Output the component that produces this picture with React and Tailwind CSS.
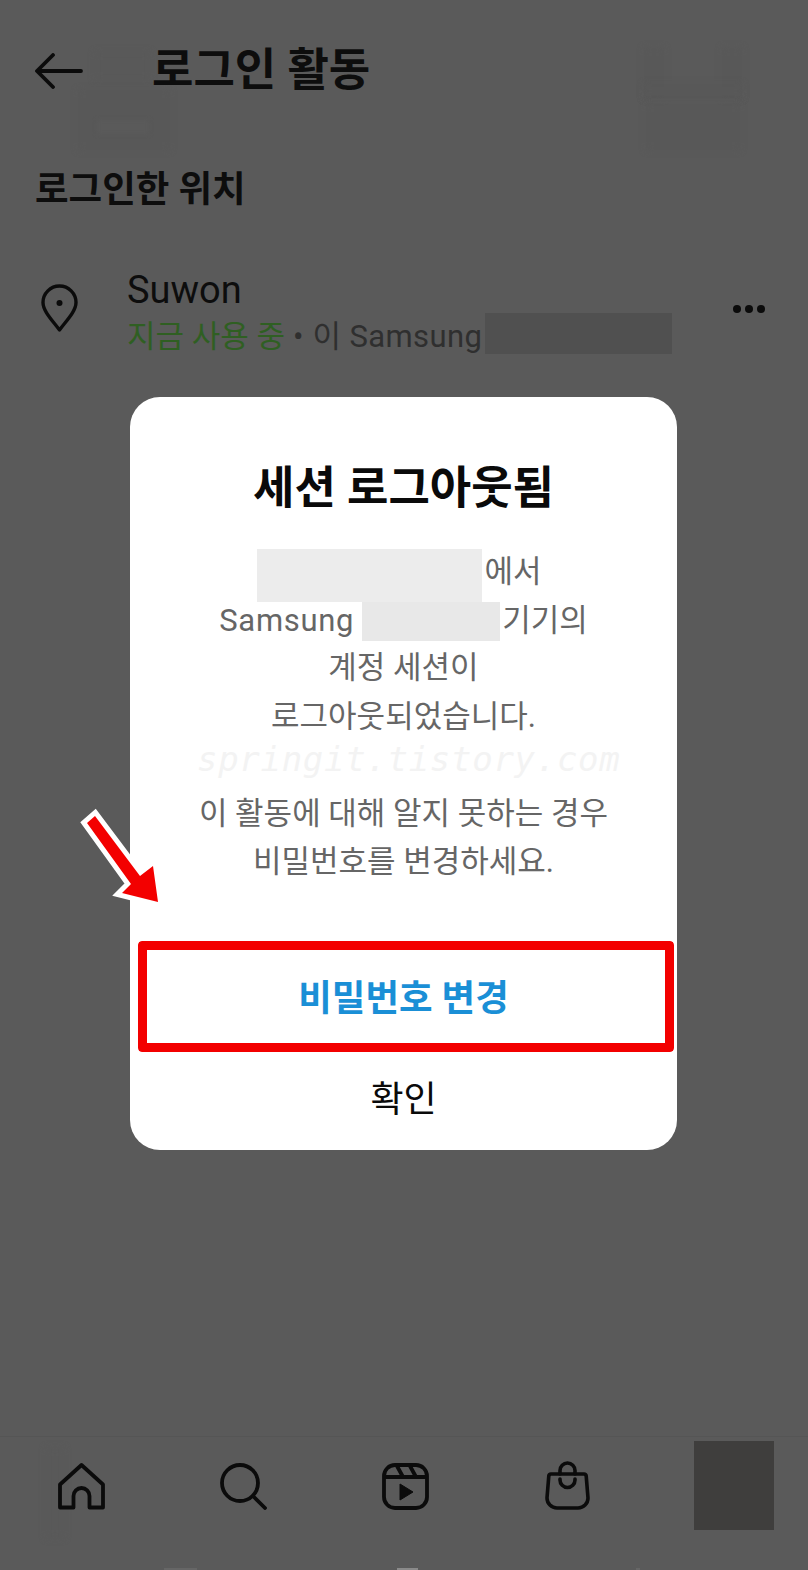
const kr = { fontFamily: '"Roboto", "Noto Sans CJK KR", sans-serif' };

function HomeIcon() {
  return (
    <svg width="47" height="47" viewBox="0 0 47 47" fill="none" stroke="#0b0b0b" strokeWidth="3.8" strokeLinejoin="round">
      <path d="M2 44.5V21.5L23.5 2L45 21.5V44.5H31.5V33a8 8 0 0 0-16 0v11.5z" />
    </svg>
  );
}

function SearchIcon() {
  return (
    <svg width="47" height="47" viewBox="0 0 47 47" fill="none" stroke="#0b0b0b" strokeWidth="3.8" strokeLinecap="round">
      <circle cx="20" cy="20" r="18" />
      <path d="M33 33l12 12" />
    </svg>
  );
}

function ReelsIcon() {
  return (
    <svg width="47" height="47" viewBox="0 0 47 47" fill="none" stroke="#0b0b0b" strokeWidth="3.8" strokeLinejoin="round">
      <rect x="2" y="2" width="43" height="43" rx="11" />
      <path d="M2 14h43M15 3l6 11M28 3l6 11" />
      <path d="M18 21v16l13-8z" fill="#0b0b0b" stroke="#0b0b0b" strokeWidth="1" />
    </svg>
  );
}

function ShopIcon() {
  return (
    <svg className="-mt-[2px]" width="45" height="49" viewBox="0 0 45 49" fill="none" stroke="#0b0b0b" strokeWidth="3.6" strokeLinecap="round" strokeLinejoin="round">
      <path d="M6 13h33q2 0 2.2 2L43 37a10 10 0 0 1-10 10H12A10 10 0 0 1 2 37l1.8-22Q4 13 6 13z" />
      <path d="M15 13V9.5a7.5 7.5 0 0 1 15 0V13M15 18v1a7.5 7.5 0 0 0 15 0v-1" />
    </svg>
  );
}

function App() {
  return (
    <div className="relative w-[808px] h-[1570px] overflow-hidden bg-[#5a5a5a] text-[#0d0d0d] flex flex-col" style={kr}>
      {/* faint ghost shapes left behind the header */}
      <div className="absolute left-[95px] top-[52px] w-[55px] h-[28px] bg-[#595959] blur-[3px]" />
      <div className="absolute left-[78px] top-[90px] w-[92px] h-[60px] bg-[#585858] blur-[3px]" />
      <div className="absolute left-[97px] top-[120px] w-[52px] h-[14px] bg-[#5a5a5a] blur-[2px]" />
      <div className="absolute left-[644px] top-[48px] w-[20px] h-[50px] bg-[#585858] blur-[3px]" />
      <div className="absolute left-[722px] top-[48px] w-[20px] h-[50px] bg-[#585858] blur-[3px]" />
      <div className="absolute left-[644px] top-[84px] w-[98px] h-[14px] bg-[#585858] blur-[3px]" />
      <div className="absolute left-[646px] top-[104px] w-[94px] h-[46px] bg-[#585858] blur-[3px]" />
      <div className="absolute left-[46px] top-[1448px] w-[18px] h-[90px] bg-[#595959] blur-[3px]" />

      <header className="relative flex items-center h-[136px] pl-[35px] pt-[6px]">
        <svg width="48" height="36" viewBox="0 0 48 36" fill="none" stroke="#0b0b0b" strokeWidth="3.8" strokeLinecap="round" strokeLinejoin="round">
          <path d="M46 18H3M18 2L2 18l16 16" />
        </svg>
        <h1 className="ml-[69px] text-[45px] font-bold">로그인 활동</h1>
      </header>

      <h2 className="relative pl-[35px] text-[36.5px] font-bold leading-[52px] mt-[28px]">로그인한 위치</h2>

      <div className="flex items-center pl-[41px] pr-[43px] mt-[51px]">
        <svg className="-mt-[8px]" width="37" height="48" viewBox="0 0 37 48" fill="none" stroke="#0b0b0b" strokeWidth="3.4" strokeLinejoin="round">
          <path d="M18.5 46C11 36 2 27 2 18.5a16.5 16.5 0 0 1 33 0C35 27 26 36 18.5 46z" />
          <circle cx="18.5" cy="19" r="3" fill="#0b0b0b" stroke="none" />
        </svg>
        <div className="ml-[49px] flex-1">
          <div className="text-[38px] leading-[46px]">Suwon</div>
          <div className="flex items-center h-[44px] text-[31px] leading-[44px] text-[#2f2f2f]">
            <span className="mt-[3px] text-[#2f5f22]">지금 사용 중</span>
            <span className="mt-[3px] ml-[8px]">•</span>
            <span className="mt-[3px] ml-[9px] tracking-[0.4px]">이 Samsung</span>
            <span className="-mt-[4px] ml-[3px] w-[187px] h-[41px] bg-[#505050]" />
          </div>
        </div>
        <div className="-mt-[6px] flex gap-[4px]">
          <span className="w-[8px] h-[8px] rounded-full bg-[#0b0b0b]" />
          <span className="w-[8px] h-[8px] rounded-full bg-[#0b0b0b]" />
          <span className="w-[8px] h-[8px] rounded-full bg-[#0b0b0b]" />
        </div>
      </div>

      <nav className="relative mt-auto h-[134px] border-t border-[#555555] flex items-start pt-[4px]">
        <div className="grid grid-cols-[repeat(4,162px)] justify-items-center items-start pt-[22px]">
          <HomeIcon />
          <SearchIcon />
          <ReelsIcon />
          <ShopIcon />
        </div>
        <div className="ml-[46px] w-[80px] h-[89px] bg-[#3f3e3d]" />
      </nav>

      {/* tops of the system buttons, cut off by the page edge */}
      <div className="absolute left-[164px] bottom-0 w-[33px] h-[2px] bg-[#666666]" />
      <div className="absolute left-[397px] bottom-0 w-[21px] h-[2px] bg-[#8a8a8a]" />
      <div className="absolute left-[636px] bottom-0 w-[4px] h-[2px] bg-[#666666]" />

      {/* dialog over the dimmed page */}
      <div className="absolute left-[130px] top-[397px] w-[547px] h-[753px] bg-white rounded-[30px] flex flex-col items-center">
        <h3 className="mt-[62px] text-[45px] leading-[60px] font-bold text-[#0a0a0a]">세션 로그아웃됨</h3>
        <div className="mt-[30px] w-full text-center text-[31px] leading-[48px] text-[#666666]">
          <div className="flex justify-center items-start h-[53px] pr-[8px]">
            <span className="w-[225px] h-[53px] bg-[#ececec]" />
            <span className="-mt-[1px] ml-[2px]">에서</span>
          </div>
          <div className="flex justify-center items-start h-[42px]">
            <span className="-mt-[5px] tracking-[0.7px]">Samsung</span>
            <span className="ml-[8px] w-[138px] h-[39px] bg-[#e8e8e8]" />
            <span className="-mt-[5px] ml-[2px]">기기의</span>
          </div>
          <div>계정 세션이</div>
          <div className="mt-[1px]">로그아웃되었습니다.</div>
          <div className="mt-[49px]">이 활동에 대해 알지 못하는 경우</div>
          <div>비밀번호를 변경하세요.</div>
        </div>
        <div className="mt-auto w-full">
          <div className="relative h-[111px] pt-[6px] flex items-center justify-center text-[36.5px] font-bold text-[#1a8fd6]">
            비밀번호 변경
            <div className="absolute left-[8px] right-[3px] inset-y-0 border-[9px] border-[#f30000] rounded-[4px] outline-2 outline-white" />
          </div>
          <div className="h-[98px] flex items-center justify-center text-[36px] text-[#0a0a0a] pb-[2px]">확인</div>
        </div>
      </div>

      <div className="absolute left-[197px] top-[734px] text-[34px] italic font-light tracking-[0.7px] text-[#f3f3f3]" style={{ fontFamily: '"DejaVu Sans Mono", monospace' }}>springit.tistory.com</div>

      {/* annotation arrow */}
      <svg className="absolute left-[70px] top-[800px]" width="100" height="110" viewBox="0 0 100 110">
        <path d="M17 23L25 16L70 76L83 66L88 102L52 93L61 84z" fill="#f30000" stroke="#fff" strokeWidth="10" strokeMiterlimit="6" paintOrder="stroke" />
      </svg>
    </div>
  );
}

export default App;
